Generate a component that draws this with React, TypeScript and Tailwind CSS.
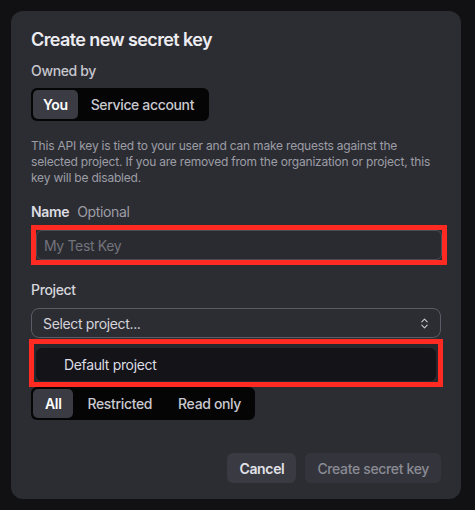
import React from "react";
import { ChevronsUpDown } from "lucide-react";

export default function App() {
  return (
    <div
      className="w-[475px] h-[510px] bg-[#111113] pt-[11px] pl-[11px] tracking-[-0.35px]"
      style={{ fontFamily: "Inter, 'Noto Sans', sans-serif" }}
    >
      <div className="w-[450px] h-[488px] rounded-[12px] bg-[#2c2d33] px-[20px] pt-[15px] flex flex-col">
        <div className="h-[28px] leading-[28px] text-[18px] font-semibold text-[#ececf1] tracking-[-0.6px]">
          Create new secret key
        </div>
        <div className="mt-[7px] h-[20px] leading-[20px] text-[14px] font-medium text-[#c6c6cd]">
          Owned by
        </div>
        <div className="mt-[7px] flex">
          <div className="flex h-[33px] items-center rounded-[6px] bg-[#050506] p-[2px]">
            <div className="h-[29px] px-[10px] flex items-center rounded-[5px] bg-[#3a3b43] text-[14px] font-semibold text-white">
              You
            </div>
            <div className="h-[29px] px-[13px] flex items-center text-[14px] font-medium text-[#c9c9cf]">
              Service account
            </div>
          </div>
        </div>
        <p className="mt-[17px] text-[12px] leading-[16px] text-[#9d9da6] tracking-[-0.2px]">
          This API key is tied to your user and can make requests against the selected project. If you are removed from the organization or project, this key will be disabled.
        </p>
        <div className="mt-[16px] h-[20px] leading-[20px] text-[14px] flex gap-[8px]">
          <span className="font-semibold text-[#dcdce2]">Name</span>
          <span className="text-[#9d9da6]">Optional</span>
        </div>
        <div className="mt-[3px] w-[416px] border-[5px] border-[#ff2a22]">
          <div className="h-[30px] rounded-[6px] border border-[#4a4b55] bg-[#2a2b31] flex items-center px-[7px] text-[14px] text-[#72737c]">
            My Test Key
          </div>
        </div>
        <div className="mt-[15px] h-[20px] leading-[20px] text-[14px] font-medium text-[#d6d6dc]">
          Project
        </div>
        <div className="mt-[8px] h-[30px] w-[410px] rounded-[8px] border border-[#5a5b67] flex items-center justify-between pl-[11px] pr-[9px] text-[14px] text-[#d4d4da]">
          <span>Select project...</span>
          <ChevronsUpDown size={13} strokeWidth={2} className="text-[#c8c8ce]" />
        </div>
        <div className="mt-[1px] -ml-[2px] w-[414px] border-[5px] border-[#ff2a22] bg-[#26272c] px-[2px] pt-[4px] pb-[1px]">
          <div className="h-[33px] rounded-[6px] bg-[#131318] flex items-center pl-[28px] text-[14px] text-[#dcdce2]">
            Default project
          </div>
        </div>
        <div className="flex">
          <div className="flex h-[33px] items-center rounded-[6px] bg-[#050506] p-[2px]">
            <div className="h-[29px] px-[12px] flex items-center rounded-[5px] bg-[#3a3b43] text-[14px] font-semibold text-white">
              All
            </div>
            <div className="h-[29px] px-[14px] flex items-center text-[14px] font-medium text-[#c9c9cf]">
              Restricted
            </div>
            <div className="h-[29px] px-[12px] flex items-center text-[14px] font-medium text-[#c9c9cf]">
              Read only
            </div>
          </div>
        </div>
        <div className="mt-[33px] flex justify-end gap-[9px]">
          <div className="h-[30px] px-[12px] rounded-[6px] bg-[#393a42] flex items-center text-[14px] font-semibold text-[#e2e2e8]">
            Cancel
          </div>
          <div className="h-[30px] px-[12px] rounded-[6px] bg-[#34353c] flex items-center text-[14px] font-medium text-[#8a8b94]">
            Create secret key
          </div>
        </div>
      </div>
    </div>
  );
}
